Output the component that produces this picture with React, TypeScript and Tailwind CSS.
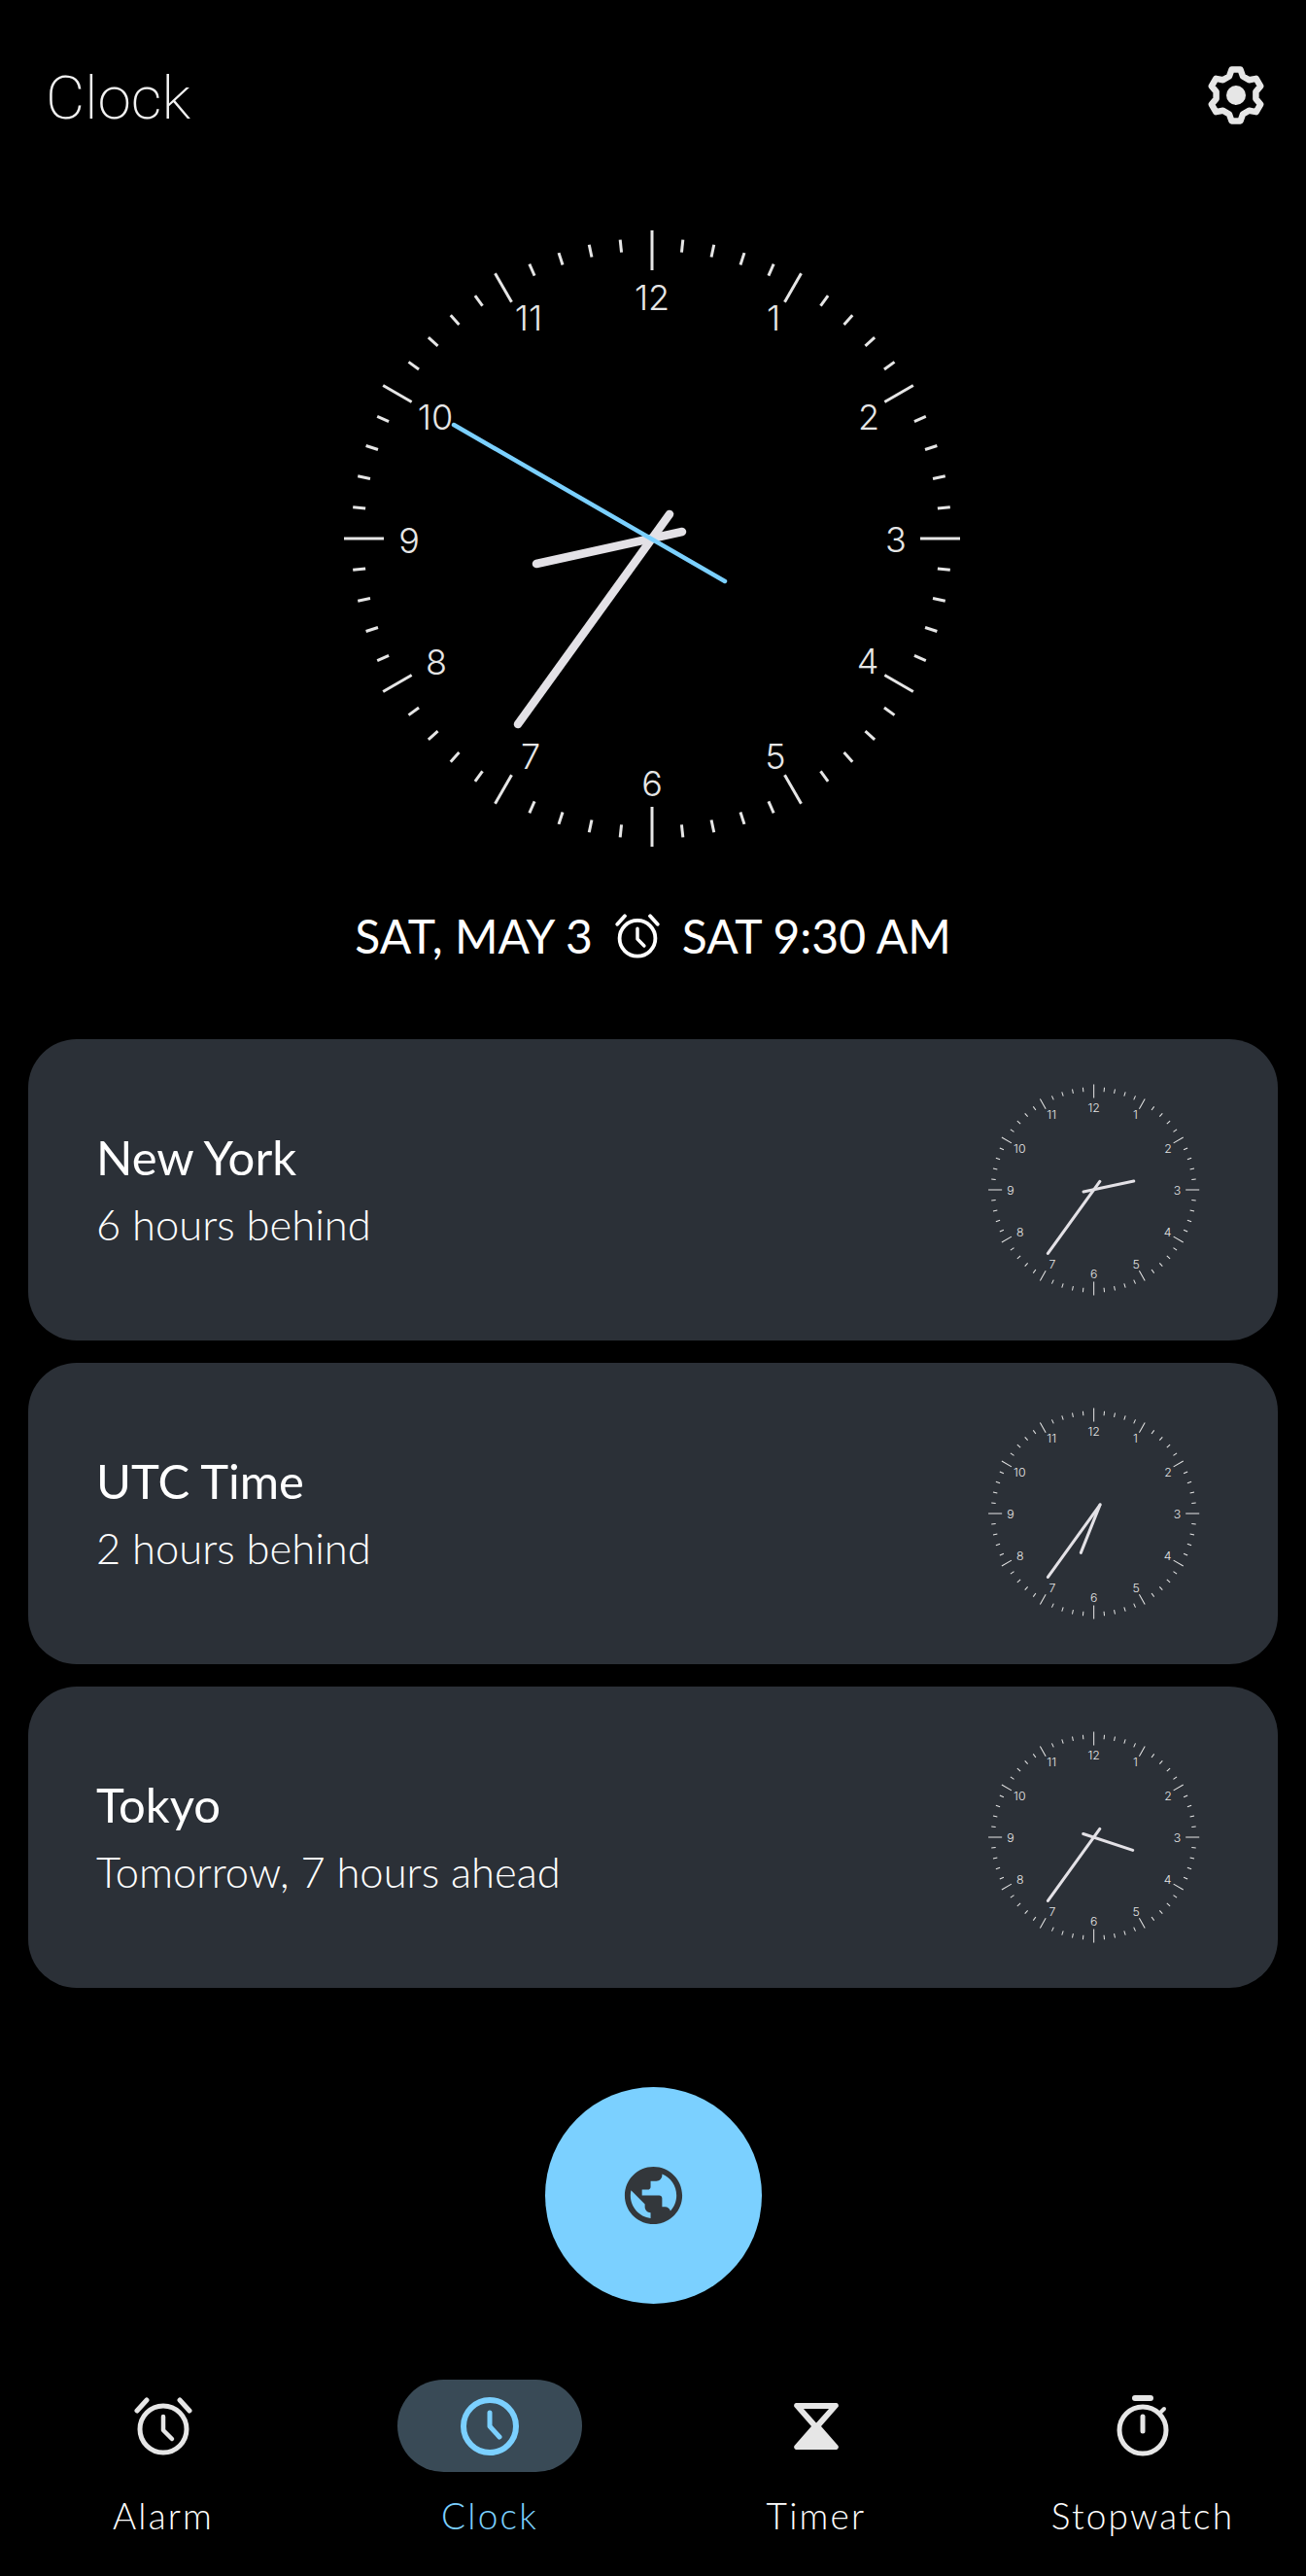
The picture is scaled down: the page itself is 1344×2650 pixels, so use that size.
import React from 'react';
import { MdPublic } from 'react-icons/md';

const NUMBERS: [string, number, number][] = [
  ['12', -1, -248],
  ['1', 124, -227],
  ['2', 222, -125],
  ['3', 250, 1],
  ['4', 221, 126],
  ['5', 126, 224],
  ['6', -1, 252],
  ['7', -126, 224],
  ['8', -223, 127],
  ['9', -251, 2],
  ['10', -224, -125],
  ['11', -128, -227],
];

// the dial in the picture sits a little left of the hands' pivot
function tickEnds(i: number) {
  const a = (i * 6 * Math.PI) / 180;
  let inner = 296;
  let outer = 309;
  let dx = -1.5;
  if (i % 15 === 0) {
    inner = 276;
    outer = 317;
    dx = -1;
  } else if (i % 5 === 0) {
    inner = 281;
    outer = 315;
    dx = -5;
  }
  return {
    x1: Math.sin(a) * inner + dx,
    y1: -Math.cos(a) * inner,
    x2: Math.sin(a) * outer + dx,
    y2: -Math.cos(a) * outer,
  };
}

interface AnalogClockProps {
  className: string;
  hour: [number, number, number, number];
  handWidth: number;
  second?: boolean;
}

function AnalogClock({ className, hour, handWidth, second }: AnalogClockProps) {
  return (
    <svg viewBox="-330 -330 660 660" className={className}>
      {Array.from({ length: 60 }, (_, i) => (
        <line key={i} {...tickEnds(i)} stroke="#e6e6e6" strokeWidth={3} />
      ))}
      {NUMBERS.map(([n, x, y]) => (
        <text
          key={n}
          x={x}
          y={y}
          dy="0.36em"
          textAnchor="middle"
          fill="#e6e6e6"
          fontSize={36}
          fontWeight={300}
          style={{ fontFamily: 'Inter, sans-serif' }}
        >
          {n}
        </text>
      ))}
      <line x1={hour[0]} y1={hour[1]} x2={hour[2]} y2={hour[3]} stroke="#e3e1e6" strokeWidth={handWidth} strokeLinecap="round" />
      <line x1={-139} y1={191} x2={17} y2={-25} stroke="#e3e1e6" strokeWidth={handWidth} strokeLinecap="round" />
      {second && (
        <line x1={-205} y1={-117} x2={74} y2={44} stroke="#7bd0ff" strokeWidth={4.5} strokeLinecap="round" />
      )}
    </svg>
  );
}

function gearPoints() {
  const pts: string[] = [];
  for (let k = 0; k < 6; k++) {
    const a = (k * 60 * Math.PI) / 180;
    const ux = Math.sin(a);
    const uy = -Math.cos(a);
    const at = (r: number, p: number) =>
      `${(35 + ux * r - uy * p).toFixed(2)},${(35 + uy * r + ux * p).toFixed(2)}`;
    pts.push(at(19.5, -7), at(26.5, -4.5), at(26.5, 4.5), at(19.5, 7));
  }
  return pts.join(' ');
}

function GearIcon({ className }: { className: string }) {
  return (
    <svg viewBox="0 0 70 70" className={className}>
      <polygon points={gearPoints()} fill="none" stroke="currentColor" strokeWidth={6.5} strokeLinejoin="round" />
      <circle cx="35" cy="35" r="10" fill="currentColor" />
    </svg>
  );
}

function AlarmIcon({ className }: { className: string }) {
  return (
    <svg viewBox="0 0 60 60" fill="none" stroke="currentColor" strokeWidth={5} strokeLinecap="round" strokeLinejoin="round" className={className}>
      <circle cx="30" cy="33" r="24" />
      <path d="M30 20v14l9 9" strokeWidth={4.5} />
      <path d="M3 14 13 3M57 14 47 3" strokeWidth={5} />
    </svg>
  );
}

function ClockIcon({ className }: { className: string }) {
  return (
    <svg viewBox="0 0 60 60" fill="none" stroke="currentColor" strokeWidth={6} strokeLinecap="round" strokeLinejoin="round" className={className}>
      <circle cx="30" cy="30" r="27" />
      <path d="M30 16v14l10 11" strokeWidth={5} />
    </svg>
  );
}

function HourglassIcon({ className }: { className: string }) {
  return (
    <svg viewBox="0 0 46 48" fill="currentColor" className={className}>
      <path
        fillRule="evenodd"
        d="M2.500 0h41c2 0 3 2.500 2 4L28 24l17.500 20c1 1.500 0 4-2 4h-41c-2 0-3-2.500-2-4L18 24 .5 4c-1-1.500 0-4 2-4zM10 6l13 14.500L36 6z"
      />
    </svg>
  );
}

function StopwatchIcon({ className }: { className: string }) {
  return (
    <svg viewBox="0 0 60 66" fill="none" stroke="currentColor" strokeLinecap="round" className={className}>
      <circle cx="28" cy="37" r="24" strokeWidth={5} />
      <path d="M20 4h16" strokeWidth={6} />
      <path d="M28 23v15" strokeWidth={5} />
      <path d="M47 18l3-3" strokeWidth={4} />
    </svg>
  );
}

const CITIES = [
  { name: 'New York', diff: '6 hours behind', hour: [-32, 6, 119, -26] as [number, number, number, number] },
  { name: 'UTC Time', diff: '2 hours behind', hour: [-40, 118, 18, -27] as [number, number, number, number] },
  { name: 'Tokyo', diff: 'Tomorrow, 7 hours ahead', hour: [-33, -10, 116, 39] as [number, number, number, number] },
];

function NavItem({ label, active, children }: { label: string; active?: boolean; children: React.ReactNode }) {
  return (
    <div className={`flex flex-col items-center ${active ? 'text-[#7bd0ff]' : 'text-[#e6e6e6]'}`}>
      <div className={`w-[190px] h-[95px] rounded-full flex items-center justify-center ${active ? 'bg-[#394a56]' : ''}`}>
        {children}
      </div>
      <span className={`mt-[22px] text-[37px] leading-[46px] tracking-[2.200px] font-light ${active ? '' : 'text-white'}`}>
        {label}
      </span>
    </div>
  );
}

export default function App() {
  return (
    <div className="w-[1344px] h-[2650px] bg-black text-white flex flex-col overflow-hidden font-['Lato',sans-serif]">
      <header className="h-[200px] pl-[47px] pr-[37px] flex items-start justify-between">
        <h1 className="mt-[63px] text-[62px] leading-[76px] font-extralight font-['Roboto',sans-serif] text-[#f2f2f2]">Clock</h1>
        <GearIcon className="mt-[63px] w-[70px] h-[70px] text-[#e6e6e6]" />
      </header>

      <div className="flex justify-center mt-[24px] h-[660px]">
        <AnalogClock className="w-[660px] h-[660px]" hour={[-120, 26, 30, -7]} handWidth={8.5} second />
      </div>

      <div className="mt-[49px] h-[60px] flex items-center justify-center gap-[23px] text-[48px] leading-[60px] font-normal">
        <span>SAT, MAY 3</span>
        <AlarmIcon className="w-[46px] h-[46px]" />
        <span>SAT 9:30 AM</span>
      </div>

      <div className="mt-[76px] mx-[29px] flex flex-col gap-[23px]">
        {CITIES.map((c) => (
          <div key={c.name} className="h-[310px] rounded-[50px] bg-[#2b3037] pl-[70px] pr-[76px] flex items-center justify-between">
            <div className="flex flex-col pb-[3px]">
              <span className="text-[49px] leading-[60px] font-normal">{c.name}</span>
              <span className="mt-[13px] text-[43.500px] leading-[52px] font-light">{c.diff}</span>
            </div>
            <AnalogClock className="w-[226px] h-[226px]" hour={c.hour} handWidth={9} />
          </div>
        ))}
      </div>

      <div className="mt-[102px] flex justify-center">
        <div className="w-[223px] h-[223px] rounded-full bg-[#7bd0ff] flex items-center justify-center">
          <MdPublic className="w-[71px] h-[71px] text-[#33373b]" />
        </div>
      </div>

      <nav className="mt-[78px] grid grid-cols-4 justify-items-center">
        <NavItem label="Alarm">
          <AlarmIcon className="w-[60px] h-[60px] text-[#e6e6e6]" />
        </NavItem>
        <NavItem label="Clock" active>
          <ClockIcon className="w-[60px] h-[60px]" />
        </NavItem>
        <NavItem label="Timer">
          <HourglassIcon className="w-[46px] h-[48px] text-[#e6e6e6]" />
        </NavItem>
        <NavItem label="Stopwatch">
          <StopwatchIcon className="w-[60px] h-[66px] ml-[4px] text-[#e6e6e6]" />
        </NavItem>
      </nav>
    </div>
  );
}
